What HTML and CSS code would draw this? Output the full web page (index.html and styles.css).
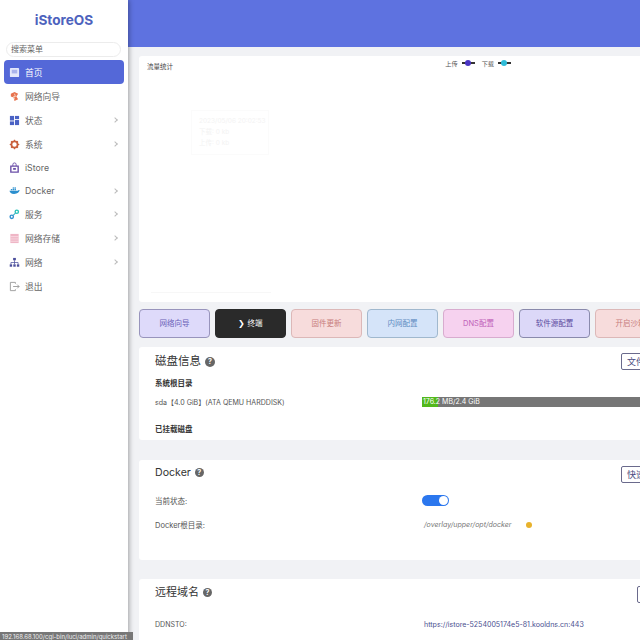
FILE: index.html
```html
<!DOCTYPE html>
<html lang="zh-CN">

<head>
  <title>iStoreOS</title>
  <meta charset="utf-8">
  <meta name="viewport" content="width=device-width, initial-scale=1">
  <link rel="stylesheet" href="styles.css">
</head>

<body>
  <aside class="sidebar">
    <div class="logo">iStoreOS</div>
    <div class="search">搜索菜单</div>
    <ul class="menu">
      <li class="menu-item active">
        <svg class="icon" viewBox="0 0 12 12"><rect x="1" y="1" width="10" height="10" rx="1" fill="#e4e7fb"/><rect x="3" y="3" width="6" height="4" fill="#aab3ec"/></svg>
        <span>首页</span>
      </li>
      <li class="menu-item">
        <svg class="icon" viewBox="0 0 12 12"><path d="M2 3 L6 1 L10 3 L8 6 L10 9 L6 11 L5 7 L2 6 Z" fill="#e8734f"/><path d="M6 3 L7 6 L5 6 L6 9" stroke="#f6d3c0" fill="none"/></svg>
        <span>网络向导</span>
      </li>
      <li class="menu-item">
        <svg class="icon" viewBox="0 0 12 12"><g fill="#4a62c4"><rect x="1" y="1" width="4.5" height="5"/><rect x="6.5" y="1" width="4.5" height="3.5"/><rect x="1" y="7" width="4.5" height="4"/><rect x="6.5" y="5.5" width="4.5" height="5.5"/></g></svg>
        <span>状态</span>
        <i class="chevron"></i>
      </li>
      <li class="menu-item">
        <svg class="icon" viewBox="0 0 12 12"><circle cx="6" cy="6" r="3.4" fill="none" stroke="#c9603c" stroke-width="2"/><path d="M6 .8V2.400M6 9.600V11.200M.8 6H2.400M9.600 6H11.200M2.300 2.300L3.400 3.400M8.600 8.600L9.700 9.700M2.300 9.700L3.400 8.600M8.600 3.400L9.700 2.300" stroke="#c9603c" stroke-width="1.3"/></svg>
        <span>系统</span>
        <i class="chevron"></i>
      </li>
      <li class="menu-item short">
        <svg class="icon" viewBox="0 0 12 12"><path d="M2 4.500H10V11H2Z" fill="none" stroke="#6b4fa8" stroke-width="1.5"/><path d="M4.200 4.500V2.800A1.800 1.800 0 0 1 7.800 2.800V4.500" fill="none" stroke="#6b4fa8"/><rect x="4.500" y="6.500" width="3" height="2" fill="#6b4fa8"/></svg>
        <span>iStore</span>
      </li>
      <li class="menu-item short">
        <svg class="icon" viewBox="0 0 12 12"><path d="M.5 6.300H9.600C10 5.600 10.600 5.400 11.600 5.500 11.200 7.800 9.400 9.800 5.500 9.800 2.400 9.800 1 8.200.5 6.300Z" fill="#2b8fce"/><g fill="#2b8fce"><rect x="2" y="4.400" width="1.600" height="1.400"/><rect x="4" y="4.400" width="1.600" height="1.400"/><rect x="6" y="4.400" width="1.600" height="1.400"/><rect x="4" y="2.600" width="1.600" height="1.400"/><rect x="6" y="2.600" width="1.600" height="1.400"/></g></svg>
        <span>Docker</span>
        <i class="chevron"></i>
      </li>
      <li class="menu-item">
        <svg class="icon" viewBox="0 0 12 12"><g fill="none" stroke-width="1.5"><circle cx="3" cy="8.500" r="1.800" stroke="#2f8fd0"/><circle cx="8.500" cy="3" r="1.800" stroke="#25c4b8"/></g><path d="M4.300 7.200L7.200 4.300" stroke="#3fb0c8" stroke-width="1.200"/></svg>
        <span>服务</span>
        <i class="chevron"></i>
      </li>
      <li class="menu-item">
        <svg class="icon" viewBox="0 0 12 12"><rect x="1.500" y="1" width="9" height="10" fill="#efb6c6"/><path d="M1.500 4H10.500M1.500 6.500H10.500M1.500 9H10.500" stroke="#fbe4ea" stroke-width=".8"/></svg>
        <span>网络存储</span>
        <i class="chevron"></i>
      </li>
      <li class="menu-item">
        <svg class="icon" viewBox="0 0 12 12"><g fill="#4c4f9c"><rect x="4.500" y="1" width="3" height="2.600"/><rect x=".8" y="8" width="2.600" height="2.600"/><rect x="4.700" y="8" width="2.600" height="2.600"/><rect x="8.600" y="8" width="2.600" height="2.600"/></g><path d="M6 3.500V8M2.100 8V6H9.900V8" fill="none" stroke="#4c4f9c" stroke-width=".8"/></svg>
        <span>网络</span>
        <i class="chevron"></i>
      </li>
      <li class="menu-item">
        <svg class="icon" viewBox="0 0 12 12"><path d="M7 3V1.500H1.500V10.500H7V9" fill="none" stroke="#9a9a9a"/><path d="M4.500 6H11M9 4L11 6L9 8" fill="none" stroke="#9a9a9a"/></svg>
        <span>退出</span>
      </li>
    </ul>
  </aside>

  <div class="page">
    <header class="topbar"></header>

    <main class="content">
      <section class="card chart-card">
        <div class="chart-head">
          <span class="chart-title">流量统计</span>
          <div class="legend">
            <span>上传</span><i class="legend-mark up"></i>
            <span>下载</span><i class="legend-mark down"></i>
          </div>
        </div>
        <div class="chart-tip">
          <div>2023/05/06 20:02:53</div>
          <div>下载: 0 kb</div>
          <div>上传: 0 kb</div>
        </div>
        <div class="chart-axis"></div>
      </section>

      <div class="quick-row">
        <div class="quick lavender">网络向导</div>
        <div class="quick dark">❯ 终端</div>
        <div class="quick rose">固件更新</div>
        <div class="quick sky">内网配置</div>
        <div class="quick pink">DNS配置</div>
        <div class="quick violet">软件源配置</div>
        <div class="quick rose">开启沙箱</div>
      </div>

      <section class="card disk-card">
        <div class="card-head">
          <div class="card-title big">磁盘信息 <i class="help big-help">?</i></div>
          <div class="head-btn">文件管理</div>
        </div>
        <div class="sub-title">系统根目录</div>
        <div class="info-row disk-row">
          <div class="latin">sda【4.0 GiB】(ATA QEMU HARDDISK)</div>
          <div class="usage"><div class="usage-fill"></div><span class="usage-text">176.2 MB/2.4 GiB</span></div>
        </div>
        <div class="sub-title mounted">已挂载磁盘</div>
      </section>

      <section class="card docker-card">
        <div class="card-head">
          <div class="card-title docker-title">Docker <i class="help">?</i></div>
          <div class="head-btn">快速配置</div>
        </div>
        <div class="info-row state-row">
          <div>当前状态:</div>
          <div><span class="switch"><i></i></span></div>
        </div>
        <div class="info-row dir-row">
          <div>Docker根目录:</div>
          <div class="dir-value"><em class="latin">/overlay/upper/opt/docker</em><i class="dot"></i></div>
        </div>
      </section>

      <section class="card remote-card">
        <div class="card-head">
          <div class="card-title">远程域名 <i class="help">?</i></div>
          <div class="head-btn short-btn">配置</div>
        </div>
        <div class="info-row ddns-row">
          <div class="latin">DDNSTO:</div>
          <a class="link latin" href="#">https://istore-5254005174e5-81.kooldns.cn:443</a>
        </div>
      </section>
    </main>
  </div>

  <div class="status-url">192.168.68.100/cgi-bin/luci/admin/quickstart</div>
</body>

</html>
```

FILE: styles.css
```css
* {
  box-sizing: border-box;
}

html,
body {
  margin: 0;
  height: 640px;
  overflow: hidden;
}

body {
  display: flex;
  background-color: #f1f2f5;
  color: #555;
  font-family: Inter, "Noto Sans CJK SC", sans-serif;
  font-size: 7.5px;
}

/* Sidebar */
.sidebar {
  position: relative;
  z-index: 2;
  flex: none;
  width: 128px;
  height: 640px;
  background-color: #fff;
  box-shadow: 1px 0 5px rgba(0, 0, 0, 0.35);
}

.logo {
  height: 40px;
  padding-top: 9px;
  text-align: center;
  color: #4d62bd;
  font-family: Inter, sans-serif;
  font-size: 13.6px;
  font-weight: 700;
  line-height: 22px;
}

.search {
  height: 15px;
  margin: 2px 7px 3px 6px;
  padding-left: 4px;
  border: 1px solid #ececec;
  border-radius: 8px;
  color: #666;
  font-size: 8px;
  line-height: 12px;
}

.menu {
  list-style-type: none;
  margin: 0;
  padding: 0 4px;
}

.menu-item {
  display: flex;
  align-items: center;
  height: 24px;
  padding-left: 5px;
  padding-right: 7px;
  border-radius: 4px;
  color: #666;
  font-size: 8.75px;
}

.menu-item.short {
  height: 23px;
}

.menu-item.active {
  background-color: #5468d8;
  color: #fff;
}

.icon {
  flex: none;
  width: 11px;
  height: 11px;
  margin-right: 5px;
}

.chevron {
  width: 4px;
  height: 4px;
  margin-left: auto;
  border-top: 1px solid #bbb;
  border-right: 1px solid #bbb;
  transform: rotate(45deg);
}

/* Main area */
.page {
  flex: none;
  width: 512px;
  overflow: hidden;
}

.topbar {
  height: 47px;
  background-color: #5e72e0;
}

.content {
  width: 557px;
  padding: 9px 0 0 11px;
}

.card {
  background-color: #fff;
  border-radius: 3px;
}

.chart-card {
  position: relative;
  height: 246px;
}

.chart-head {
  display: flex;
  justify-content: space-between;
  padding: 1px 0 0 8px;
}

.chart-title {
  margin-top: 4px;
  color: #444;
  font-size: 6.5px;
}

.legend {
  display: flex;
  align-items: center;
  gap: 4px;
  margin-right: 171px;
  height: 12px;
  color: #555;
  font-size: 6.2px;
}

.legend-mark {
  position: relative;
  width: 13px;
  height: 1.5px;
  margin-right: 3px;
  background-color: #333;
}

.legend-mark::after {
  content: "";
  position: absolute;
  left: 3px;
  top: -2.5px;
  width: 6px;
  height: 6px;
  border-radius: 50%;
}

.legend-mark.up::after {
  background-color: #4a35c4;
}

.legend-mark.down::after {
  background-color: #2fbcd8;
}

.chart-tip {
  position: absolute;
  left: 52px;
  top: 54px;
  width: 78px;
  height: 45px;
  padding: 5px 7px;
  border: 1px solid #fbfbfb;
  color: #f3f3f3;
  font-size: 6.5px;
  line-height: 11px;
  white-space: nowrap;
}

.chart-axis {
  position: absolute;
  left: 12px;
  bottom: 9px;
  width: 120px;
  height: 1px;
  background-color: #f7f7f7;
}

/* Shortcut buttons */
.quick-row {
  display: flex;
  gap: 5px;
  margin: 7px 0 9px;
}

.quick {
  flex: none;
  width: 71px;
  height: 29px;
  border: 1px solid;
  border-radius: 4px;
  text-align: center;
  font-size: 7.5px;
  line-height: 27px;
}

.lavender {
  background-color: #dedafa;
  border-color: #9894bc;
  color: #6a5fb8;
}

.dark {
  background-color: #2a2a2a;
  border-color: #2a2a2a;
  color: #fff;
}

.rose {
  background-color: #f7dcdc;
  border-color: #dcb8b8;
  color: #c87c7c;
}

.sky {
  background-color: #d5e4f9;
  border-color: #a0b8ce;
  color: #5f8cc2;
}

.pink {
  background-color: #f6d2ef;
  border-color: #d8accf;
  color: #c060b8;
}

.violet {
  background-color: #dcd8f8;
  border-color: #8a8aac;
  color: #5a4a9e;
}

/* Info cards */
.disk-card,
.docker-card {
  padding: 6px 16px 0;
}

.remote-card {
  padding: 7px 16px 0;
}

.disk-card {
  height: 93px;
  margin-bottom: 20px;
}

.docker-card {
  height: 100px;
  margin-bottom: 19px;
}

.remote-card {
  height: 80px;
}

.card-head {
  display: flex;
  align-items: flex-start;
  justify-content: space-between;
  height: 17px;
}

.card-title {
  display: flex;
  align-items: center;
  gap: 4px;
  color: #333;
  font-size: 11px;
  line-height: 13px;
}

.card-title.big {
  margin-top: 2px;
  font-size: 11.5px;
}

.card-title.docker-title {
  font-size: 10.6px;
}

.help {
  display: inline-block;
  width: 9px;
  height: 9px;
  border-radius: 50%;
  background-color: #666;
  color: #fff;
  text-align: center;
  font-size: 7px;
  font-style: normal;
  font-weight: 700;
  line-height: 9px;
}

.big-help {
  width: 10px;
  height: 10px;
  line-height: 10px;
}

.head-btn {
  flex: none;
  padding: 0 5px;
  height: 17px;
  border: 1px solid #6a6a8c;
  border-radius: 2px;
  background-color: #fff;
  color: #4a4a80;
  font-size: 9px;
  line-height: 15px;
}

.short-btn {
  width: 32px;
}

.sub-title {
  margin-top: 8px;
  color: #333;
  font-size: 7.5px;
  font-weight: 700;
  line-height: 11px;
}

.mounted {
  margin-top: 17px;
}

.info-row {
  display: grid;
  grid-template-columns: 267px 1fr;
  align-items: center;
  height: 11px;
  color: #555;
  font-size: 7.5px;
}

.latin {
  font-size: 7.05px;
}

.disk-row {
  margin-top: 7px;
}

.usage {
  position: relative;
  height: 10px;
  background-color: #767676;
  color: #fff;
  font-size: 7px;
  line-height: 10px;
}

.usage-fill {
  width: 16px;
  height: 10px;
  background-color: #52b81c;
}

.usage-text {
  position: absolute;
  left: 1px;
  top: 0;
}

.state-row {
  margin-top: 12px;
}

.dir-row {
  margin-top: 13px;
}

.switch {
  display: block;
  position: relative;
  width: 27px;
  height: 11px;
  border-radius: 6px;
  background-color: #2b77ee;
}

.switch i {
  position: absolute;
  right: 1px;
  top: 1px;
  width: 9px;
  height: 9px;
  border-radius: 50%;
  background-color: #fff;
}

.dir-value {
  display: flex;
  align-items: center;
  padding-left: 2px;
  color: #777;
}

.dot {
  width: 6px;
  height: 6px;
  margin-left: 14px;
  border-radius: 50%;
  background-color: #e8b22c;
}

.ddns-row {
  margin-top: 16px;
}

.link {
  padding-left: 2px;
  color: #4a5090;
  text-decoration: none;
}

/* Browser hover url */
.status-url {
  position: absolute;
  z-index: 3;
  left: 0;
  bottom: 0;
  width: 133px;
  height: 8px;
  padding-left: 2px;
  overflow: hidden;
  background-color: #777;
  color: #eee;
  font-size: 6px;
  line-height: 9px;
  white-space: nowrap;
}
```
